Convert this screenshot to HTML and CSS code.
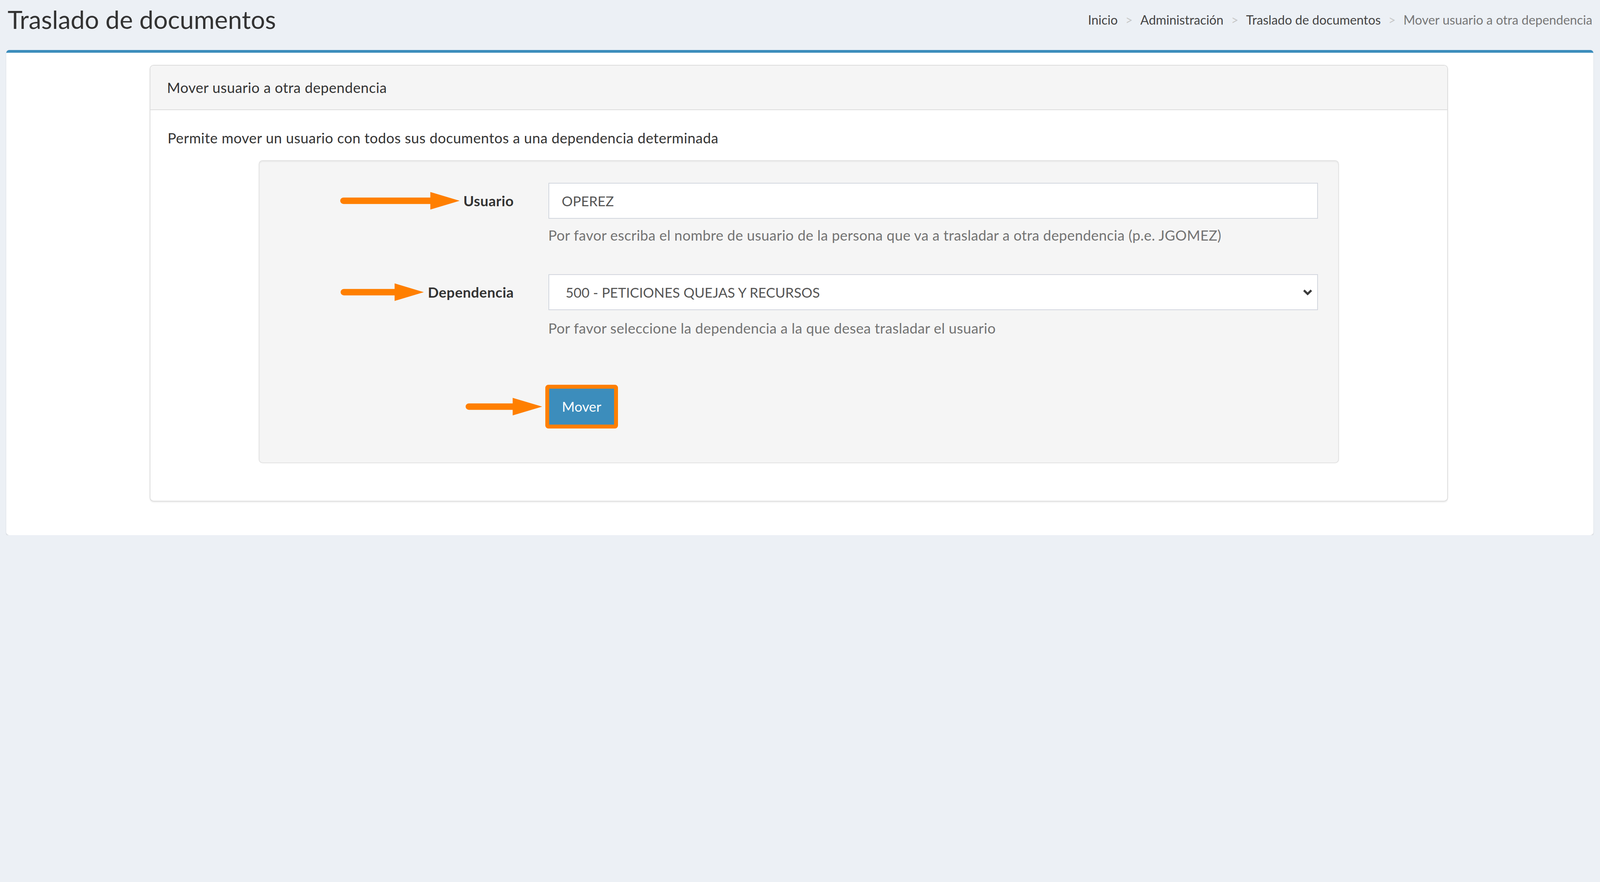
FILE: index.html
```html
<!DOCTYPE html>
<html lang="es">
<head>
<meta charset="utf-8">
<title>Traslado de documentos</title>
<link rel="stylesheet" href="styles.css">
</head>
<body>
<div class="content-wrapper">
  <section class="content-header">
    <h1 class="page-title">Traslado de documentos</h1>
    <ol class="breadcrumb">
      <li class="crumb">Inicio</li>
      <li class="crumb">Administración</li>
      <li class="crumb">Traslado de documentos</li>
      <li class="crumb active">Mover usuario a otra dependencia</li>
    </ol>
  </section>
  <section class="content">
    <div class="box">
      <div class="box-body">
        <div class="panel">
          <div class="panel-heading">Mover usuario a otra dependencia</div>
          <div class="panel-body">
            <p class="intro">Permite mover un usuario con todos sus documentos a una dependencia determinada</p>
            <form class="well">
              <div class="form-group">
                <div class="label-col">
                  <svg class="arrow arrow-long" viewBox="0 0 117 18" preserveAspectRatio="none" aria-hidden="true">
                    <path d="M3.25 9H89" stroke="#ff7f00" stroke-width="6.5" stroke-linecap="round"/>
                    <path d="M88.3 0.2L117 9L88.3 17.8Z" fill="#ff7f00"/>
                  </svg>
                  <label class="field-label" for="usuario">Usuario</label>
                </div>
                <div class="control-col">
                  <input id="usuario" class="form-control" type="text" value="OPEREZ">
                  <p class="help-block">Por favor escriba el nombre de usuario de la persona que va a trasladar a otra dependencia (p.e. JGOMEZ)</p>
                </div>
              </div>
              <div class="form-group group-second">
                <div class="label-col">
                  <svg class="arrow arrow-mid" viewBox="0 0 81.6 18" preserveAspectRatio="none" aria-hidden="true">
                    <path d="M3.25 9H54" stroke="#ff7f00" stroke-width="6.5" stroke-linecap="round"/>
                    <path d="M52.9 0.2L81.6 9L52.9 17.8Z" fill="#ff7f00"/>
                  </svg>
                  <label class="field-label" for="dependencia">Dependencia</label>
                </div>
                <div class="control-col">
                  <div class="select-wrap">
                    <select id="dependencia" class="form-control form-select">
                      <option>500 - PETICIONES QUEJAS Y RECURSOS</option>
                    </select>
                    <svg class="chevron" viewBox="0 0 10 7" aria-hidden="true">
                      <path d="M1.2 1.3L5 5L8.8 1.3" fill="none" stroke="#3a3a3a" stroke-width="2.1"/>
                    </svg>
                  </div>
                  <p class="help-block">Por favor seleccione la dependencia a la que desea trasladar el usuario</p>
                </div>
              </div>
              <div class="form-actions">
                <svg class="arrow arrow-short" viewBox="0 0 75.1 18" preserveAspectRatio="none" aria-hidden="true">
                  <path d="M3.25 9H47" stroke="#ff7f00" stroke-width="6.5" stroke-linecap="round"/>
                  <path d="M46.1 0.2L75.1 9L46.1 17.8Z" fill="#ff7f00"/>
                </svg>
                <button class="btn-mover" type="button">Mover</button>
              </div>
            </form>
          </div>
        </div>
      </div>
    </div>
  </section>
</div>
</body>
</html>
```
FILE: styles.css
```css
:root {
  --u: calc(100vw / 1568);
}

html {
  background: #ecf0f5;
  overflow: hidden;
}

body {
  margin: 0;
  background: #ecf0f5;
  font-family: "Lato", "Liberation Sans", sans-serif;
  font-size: calc(14 * var(--u));
  line-height: calc(20 * var(--u));
  letter-spacing: calc(0.2 * var(--u));
  color: #333;
}

.content-header {
  display: flex;
  justify-content: space-between;
  align-items: flex-start;
  height: calc(49 * var(--u));
  padding: 0 calc(7.5 * var(--u));
  box-sizing: border-box;
}

.page-title {
  margin: calc(4.6 * var(--u)) 0 0;
  font-size: calc(24.7 * var(--u));
  line-height: calc(29 * var(--u));
  font-weight: 400;
  letter-spacing: 0;
  color: #333;
}

.breadcrumb {
  display: flex;
  margin: calc(11.6 * var(--u)) 0 0;
  padding: 0;
  list-style: none;
  font-size: calc(12.4 * var(--u));
  line-height: calc(16 * var(--u));
  letter-spacing: 0;
  color: #444;
}

.crumb + .crumb::before {
  content: ">";
  color: #c8c8c8;
  margin: 0 calc(7.5 * var(--u));
}

.crumb.active {
  color: #777;
}

.content {
  padding: 0 calc(6.5 * var(--u)) 0 calc(6 * var(--u));
}

.box {
  background: #fff;
  border-top: calc(3 * var(--u)) solid #3c8dbc;
  border-radius: calc(3 * var(--u));
  box-shadow: 0 calc(1 * var(--u)) calc(1 * var(--u)) rgba(0, 0, 0, 0.12);
}

.box-body {
  padding: calc(11.7 * var(--u)) 0 calc(33 * var(--u)) calc(140.5 * var(--u));
}

.panel {
  width: calc(1272.5 * var(--u));
  box-sizing: border-box;
  background: #fff;
  border: calc(1 * var(--u)) solid #ddd;
  border-radius: calc(4 * var(--u));
  box-shadow: 0 calc(1 * var(--u)) calc(1 * var(--u)) rgba(0, 0, 0, 0.06);
}

.panel-heading {
  padding: calc(11.6 * var(--u)) calc(16.4 * var(--u)) calc(11.6 * var(--u));
  background: #f5f5f5;
  border-bottom: calc(1 * var(--u)) solid #ddd;
  border-radius: calc(3 * var(--u)) calc(3 * var(--u)) 0 0;
  color: #333;
}

.panel-body {
  padding: calc(17.2 * var(--u)) calc(17 * var(--u)) calc(17 * var(--u));
}

.intro {
  margin: 0 0 calc(11.6 * var(--u));
  color: #333;
}

.well {
  margin: 0 calc(89 * var(--u)) calc(19.8 * var(--u));
  padding: calc(21.6 * var(--u)) calc(19.8 * var(--u)) calc(33.2 * var(--u)) 0;
  background: #f5f5f5;
  border: calc(1 * var(--u)) solid #e3e3e3;
  border-radius: calc(4 * var(--u));
  box-shadow: inset 0 calc(1 * var(--u)) calc(1 * var(--u)) rgba(0, 0, 0, 0.05);
}

.form-group {
  display: flex;
  align-items: flex-start;
}

.group-second {
  margin-top: calc(28.3 * var(--u));
}

.label-col {
  width: calc(249.5 * var(--u));
  height: calc(35.2 * var(--u));
  flex: none;
  display: flex;
  align-items: center;
  justify-content: flex-end;
  gap: calc(3.8 * var(--u));
}

.field-label {
  font-weight: 700;
  color: #333;
}

.arrow {
  display: block;
  height: calc(17.6 * var(--u));
  flex: none;
}

.arrow-long {
  width: calc(117 * var(--u));
}

.arrow-mid {
  width: calc(81.6 * var(--u));
}

.arrow-short {
  width: calc(75.1 * var(--u));
}

.control-col {
  flex: 1;
  margin-left: calc(33.8 * var(--u));
}

.form-control {
  display: block;
  width: 100%;
  height: calc(35.2 * var(--u));
  box-sizing: border-box;
  margin: 0;
  padding: 0 calc(12.4 * var(--u));
  border: calc(1 * var(--u)) solid #d2d6de;
  border-radius: 0;
  background: #fff;
  font-family: "Lato", "Liberation Sans", sans-serif;
  font-size: calc(13.5 * var(--u));
  letter-spacing: 0;
  color: #555;
  outline: none;
}

.select-wrap {
  position: relative;
}

.form-select {
  appearance: none;
  -webkit-appearance: none;
  padding-left: calc(16.2 * var(--u));
}

.chevron {
  position: absolute;
  right: calc(5.4 * var(--u));
  top: calc(14.3 * var(--u));
  width: calc(9.6 * var(--u));
  height: calc(6.7 * var(--u));
  pointer-events: none;
}

.help-block {
  margin: calc(6.1 * var(--u)) 0 0;
  letter-spacing: calc(0.14 * var(--u));
  color: #737373;
}

.group-second .help-block {
  margin-top: calc(7.5 * var(--u));
}

.form-actions {
  display: flex;
  align-items: center;
  gap: calc(3 * var(--u));
  margin: calc(45.6 * var(--u)) 0 0 calc(202.2 * var(--u));
}

.btn-mover {
  width: calc(71.3 * var(--u));
  height: calc(42.8 * var(--u));
  box-sizing: border-box;
  padding: 0;
  border: calc(4 * var(--u)) solid #ff7f00;
  border-radius: calc(3 * var(--u));
  background: #3c8dbc;
  color: #fff;
  font-family: "Lato", "Liberation Sans", sans-serif;
  font-size: calc(13.5 * var(--u));
  line-height: calc(20 * var(--u));
  letter-spacing: 0;
}
```
